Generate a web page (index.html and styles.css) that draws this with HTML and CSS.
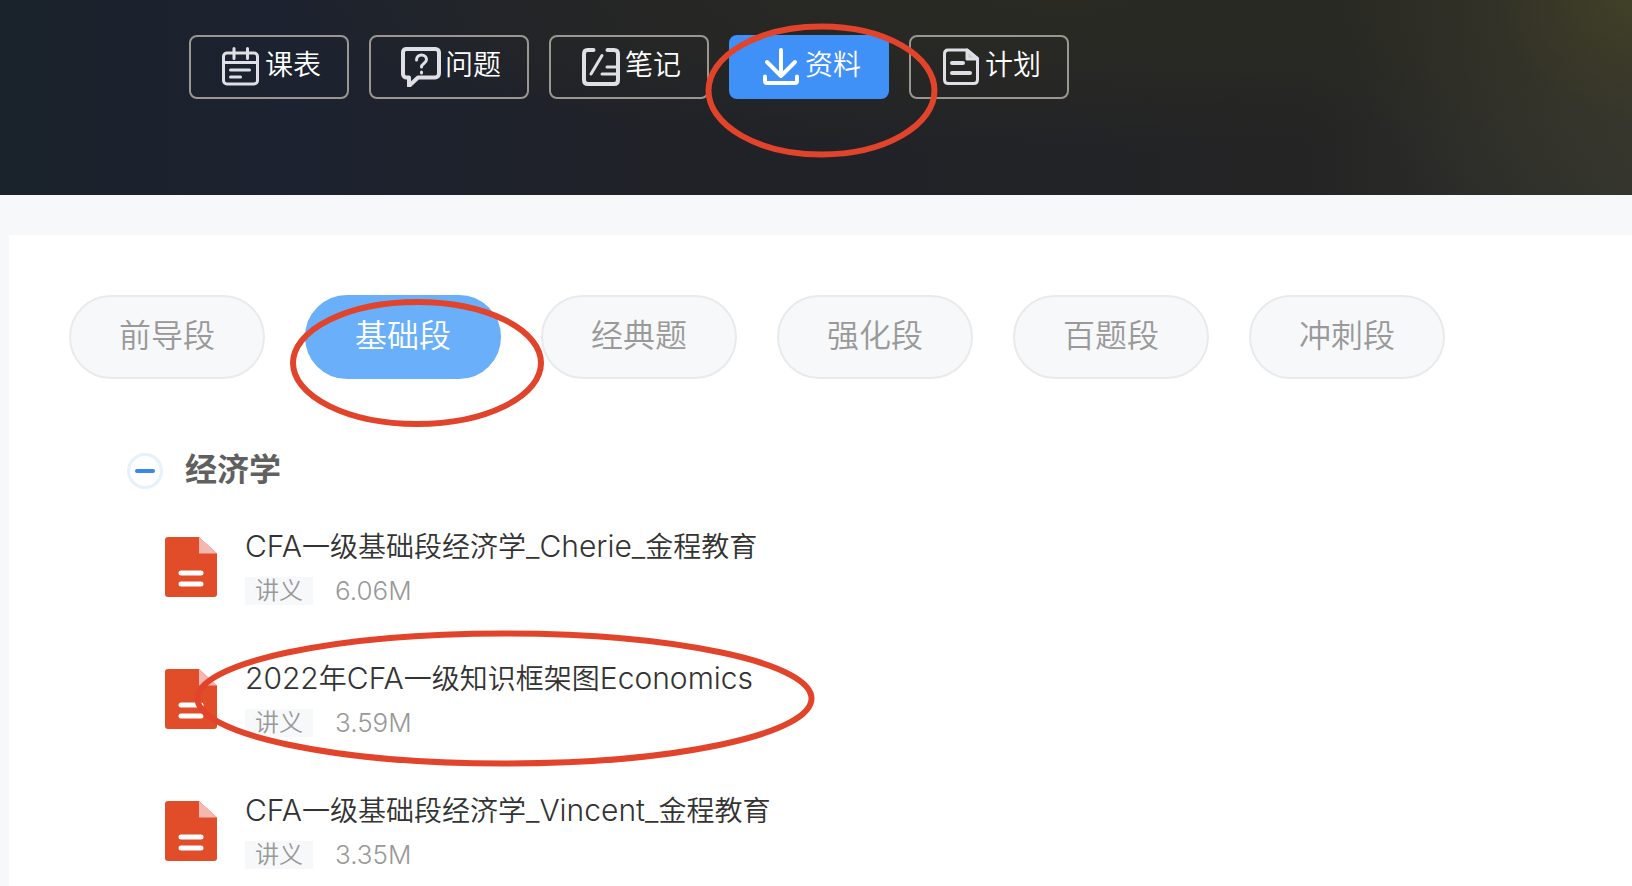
FILE: index.html
```html
<!DOCTYPE html>
<html lang="zh-CN">
<head>
<meta charset="utf-8">
<meta name="viewport" content="width=device-width, initial-scale=1">
<title>资料</title>
<link rel="stylesheet" href="styles.css">
</head>
<body>
<header class="hero">
  <nav class="actions">
    <button class="action" type="button">
      <svg class="action-icon" viewBox="0 0 40 40" aria-hidden="true"><rect x="2.500" y="6" width="34" height="31" rx="3.500"/><path d="M3 15.500h33M13 1.500v10M26.500 1.500v10M9.500 23h19M9.500 30h10"/></svg>
      <span class="action-label">课表</span>
    </button>
    <button class="action" type="button">
      <svg class="action-icon" viewBox="0 0 40 40" aria-hidden="true"><path class="thick" d="M5 2h29.500a3.500 3.500 0 0 1 3.500 3.500v21a4 4 0 0 1-4 4H17L8 39V30.500H5.500A3.500 3.500 0 0 1 2 27V5.500A3.500 3.500 0 0 1 5 2z"/><path d="M15.500 13c0-7 10-6.500 10-.5 0 4-5 4-5 7.500"/><path d="M20.500 25v1"/></svg>
      <span class="action-label">问题</span>
    </button>
    <button class="action" type="button">
      <svg class="action-icon" viewBox="0 0 40 40" aria-hidden="true"><path class="thick" d="M12.500 3H6.500Q3 3 3 7v26q0 4 4 4h26q4 0 4-4V7q0-4-4-4h-6.500"/><path d="M21 8.500L10 27M26 20h9M21 27h14"/></svg>
      <span class="action-label">笔记</span>
    </button>
    <button class="action action-active" type="button">
      <svg class="action-icon" viewBox="0 0 40 40" aria-hidden="true"><path class="thick" d="M20 3v26M6 15L20 29l14-14M4 29.500V34q0 2 2 2h28q2 0 2-2v-4.500"/></svg>
      <span class="action-label">资料</span>
    </button>
    <button class="action" type="button">
      <svg class="action-icon" viewBox="0 0 40 40" aria-hidden="true"><path d="M26 3H7Q3.500 3 3.500 7v25.500q0 4 4 4h25q4 0 4-4V11.500z"/><path class="fill" d="M26 3v9h10.500z"/><path class="thick" d="M11 16h11M11 26h18"/></svg>
      <span class="action-label">计划</span>
    </button>
  </nav>
</header>
<main class="panel">
  <nav class="stages">
    <button class="stage" type="button">前导段</button>
    <button class="stage stage-active" type="button">基础段</button>
    <button class="stage" type="button">经典题</button>
    <button class="stage" type="button">强化段</button>
    <button class="stage" type="button">百题段</button>
    <button class="stage" type="button">冲刺段</button>
  </nav>
  <section class="subject">
    <div class="subject-head">
      <button class="toggle" type="button" aria-label="收起" aria-expanded="true"><span class="minus"></span></button>
      <h2 class="subject-name">经济学</h2>
    </div>
    <ul class="files">
      <li class="file">
        <svg class="file-icon" viewBox="0 0 52 62" aria-hidden="true"><path fill="#e04d28" d="M3 1h31l18 16.500V58a3 3 0 0 1-3 3H3a3 3 0 0 1-3-3V4a3 3 0 0 1 3-3z"/><path fill="#f4b8b0" d="M34 1l18 16.500H34z"/><path stroke="#fff" stroke-width="5" stroke-linecap="round" d="M16 37h20M16 48h20"/></svg>
        <div class="file-body">
          <a class="file-title" href="#"><span class="latin">CFA</span>一级基础段经济学<span class="latin">_Cherie_</span>金程教育</a>
          <div class="file-meta"><span class="tag">讲义</span><span class="size">6.06M</span></div>
        </div>
      </li>
      <li class="file">
        <svg class="file-icon" viewBox="0 0 52 62" aria-hidden="true"><path fill="#e04d28" d="M3 1h31l18 16.500V58a3 3 0 0 1-3 3H3a3 3 0 0 1-3-3V4a3 3 0 0 1 3-3z"/><path fill="#f4b8b0" d="M34 1l18 16.500H34z"/><path stroke="#fff" stroke-width="5" stroke-linecap="round" d="M16 37h20M16 48h20"/></svg>
        <div class="file-body">
          <a class="file-title" href="#"><span class="latin">2022</span>年<span class="latin">CFA</span>一级知识框架图<span class="latin">Economics</span></a>
          <div class="file-meta"><span class="tag">讲义</span><span class="size">3.59M</span></div>
        </div>
      </li>
      <li class="file">
        <svg class="file-icon" viewBox="0 0 52 62" aria-hidden="true"><path fill="#e04d28" d="M3 1h31l18 16.500V58a3 3 0 0 1-3 3H3a3 3 0 0 1-3-3V4a3 3 0 0 1 3-3z"/><path fill="#f4b8b0" d="M34 1l18 16.500H34z"/><path stroke="#fff" stroke-width="5" stroke-linecap="round" d="M16 37h20M16 48h20"/></svg>
        <div class="file-body">
          <a class="file-title" href="#"><span class="latin">CFA</span>一级基础段经济学<span class="latin">_Vincent_</span>金程教育</a>
          <div class="file-meta"><span class="tag">讲义</span><span class="size">3.35M</span></div>
        </div>
      </li>
    </ul>
  </section>
</main>
<svg class="marks" width="820" height="780" viewBox="0 0 820 780" aria-hidden="true">
  <ellipse cx="821.500" cy="90.500" rx="113" ry="64"/>
  <ellipse cx="417" cy="363" rx="124" ry="61"/>
  <ellipse cx="504.500" cy="698.500" rx="307" ry="65"/>
</svg>
</body>
</html>
```
FILE: styles.css
```css
* {
  box-sizing: border-box;
}

body {
  margin: 0;
  position: relative;
  background: #f7f8fa;
  font-family: Inter, "Noto Sans CJK SC", sans-serif;
  font-weight: 350;
}

button {
  font: inherit;
  cursor: pointer;
}

.hero {
  padding: 35px 32px 96px 189px;
  background:
    radial-gradient(ellipse 300px 260px at 100% 0, rgba(68, 66, 38, 0.85) 0, rgba(60, 59, 40, 0.4) 45%, transparent 100%),
    radial-gradient(ellipse 800px 150px at 65% 0, rgba(44, 44, 34, 0.8) 0, rgba(42, 42, 35, 0.6) 50%, transparent 100%),
    linear-gradient(to right, #1a222b, #1c222f 18%, #202228 40%, #222327 65%, #242424 80%, #33342f);
}

.actions {
  display: flex;
  gap: 20px;
}

.action {
  display: flex;
  align-items: center;
  gap: 4px;
  width: 160px;
  height: 64px;
  padding: 0 26px 0 30px;
  border: 2px solid #99978f;
  border-radius: 8px;
  background: transparent;
  color: #fff;
  font-size: 28px;
  line-height: 40px;
}

.action-active {
  border-color: #3f90f7;
  background: #3f90f7;
}

.action-icon {
  flex: none;
  width: 40px;
  height: 40px;
  fill: none;
  stroke: #dfe0e6;
  stroke-width: 3;
  stroke-linecap: round;
  stroke-linejoin: round;
}

.action-icon .thick {
  stroke-width: 4;
}

.action-icon .fill {
  fill: #c9cace;
}

.action-active .action-icon {
  stroke: #fff;
}

.action-label {
  padding-bottom: 4px;
  white-space: nowrap;
}

.panel {
  min-height: 651px;
  margin: 40px 0 0 9px;
  padding: 60px 60px 0;
  background: #fff;
}

.stages {
  display: flex;
  gap: 40px;
}

.stage {
  width: 196px;
  height: 84px;
  padding: 0 0 8px;
  border: 2px solid #e9eaec;
  border-radius: 42px;
  background: #f7f8fa;
  color: #999;
  font-size: 32px;
}

.stage-active {
  border-color: #69aff9;
  background: #69aff9;
  color: #fff;
}

.subject {
  padding: 70px 0 0 58px;
}

.subject-head {
  display: flex;
  align-items: center;
  gap: 22px;
}

.toggle {
  display: flex;
  align-items: center;
  justify-content: center;
  width: 36px;
  height: 36px;
  padding: 0;
  border: 3px solid #e6f1fd;
  border-radius: 50%;
  background: #fff;
}

.minus {
  width: 20px;
  height: 4px;
  border-radius: 2px;
  background: #3b87ea;
}

.subject-name {
  margin: 0;
  padding-bottom: 2px;
  color: #606060;
  font-size: 32px;
  font-weight: 700;
  line-height: 42px;
}

.files {
  display: grid;
  gap: 48px;
  margin: 0;
  padding: 32px 0 0 38px;
  list-style: none;
}

.file {
  display: flex;
  align-items: center;
  gap: 28px;
  height: 84px;
}

.file-icon {
  flex: none;
  width: 52px;
  height: 62px;
}

.file-body {
  padding-bottom: 2px;
}

.file-title {
  display: block;
  color: #333;
  font-size: 28px;
  line-height: 40px;
  text-decoration: none;
  white-space: nowrap;
}

.latin {
  font-size: 30px;
  font-weight: 300;
  line-height: 1;
}

.file-meta {
  display: flex;
  align-items: center;
  gap: 22px;
  margin-top: 10px;
  color: #999;
  font-size: 24px;
  line-height: 28px;
}

.tag {
  padding: 0 10px;
  background: #f7f8fa;
}

.size {
  font-size: 26px;
}

.marks {
  position: absolute;
  top: 0;
  left: 0;
  overflow: visible;
  pointer-events: none;
  fill: none;
  stroke: #e2432b;
  stroke-width: 6;
}
```
